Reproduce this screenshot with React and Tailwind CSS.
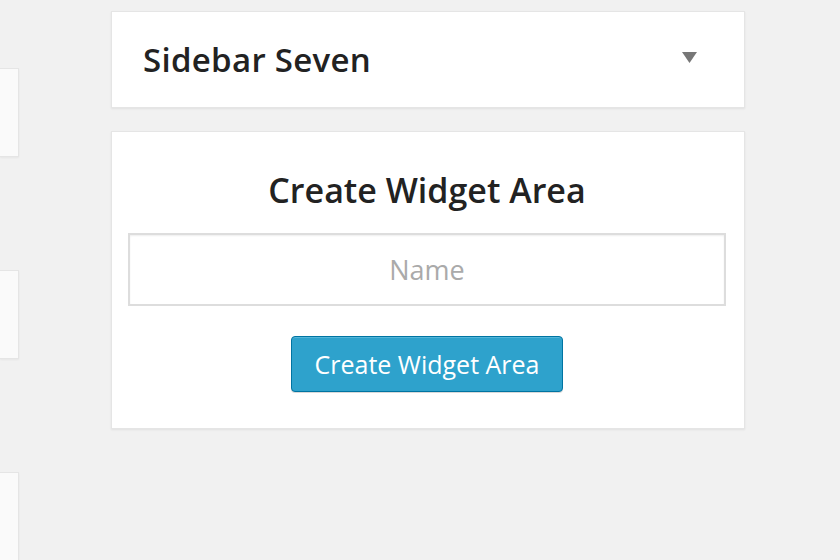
import React from 'react';

const LeftStub = ({ className }) => (
  <div className={`h-[89px] w-[19px] shrink-0 border-y border-r border-[#e5e5e5] bg-[#fafafa] shadow-[0_1px_2px_rgba(0,0,0,0.05)] ${className}`} />
);

export default function App() {
  return (
    <div className="flex h-[560px] w-[840px] overflow-hidden bg-[#f1f1f1]" style={{ fontFamily: '"Open Sans", "Noto Sans", sans-serif' }}>
      {/* cut-off widget column on the left */}
      <div className="flex w-[19px] shrink-0 flex-col pt-[68px]">
        <LeftStub />
        <LeftStub className="mt-[113px]" />
        <LeftStub className="mt-[113px] h-[120px]" />
      </div>

      <div className="ml-[92px] flex w-[634px] shrink-0 flex-col pt-[11px]">
        {/* Sidebar header */}
        <div className="flex h-[97px] items-center justify-between border border-[#e5e5e5] bg-white pl-[31px] pr-[47px] shadow-[0_1px_2px_rgba(0,0,0,0.07)]">
          <h3 className="text-[33px] font-semibold leading-[40px] tracking-[0.3px] text-[#222]">Sidebar Seven</h3>
          <svg width="15" height="11" viewBox="0 0 15 11" className="mt-[-4px]">
            <path d="M0 0 H15 L7.5 11 Z" fill="#777" />
          </svg>
        </div>

        {/* Create widget area */}
        <div className="mt-[23px] flex h-[298px] flex-col items-center border border-[#e5e5e5] bg-white pl-[16px] pr-[18px] pt-[37px] shadow-[0_1px_2px_rgba(0,0,0,0.07)]">
          <h3 className="text-[34px] font-semibold leading-[42px] text-[#222]">Create Widget Area</h3>
          <input
            type="text"
            placeholder="Name"
            className="mt-[22px] h-[73px] w-full border-2 border-[#dddddd] bg-white text-center text-[27px] text-[#333] shadow-[inset_0_1px_2px_rgba(0,0,0,0.07)] outline-none placeholder:text-[#aaaaaa]"
          />
          <button className="mt-[30px] h-[56px] w-[272px] rounded-[4px] border border-[#0074a2] bg-[#2ea2cc] text-[25px] leading-none text-white shadow-[inset_0_1px_0_rgba(120,200,230,0.5),0_1px_0_rgba(0,0,0,0.15)]">
            Create Widget Area
          </button>
        </div>
      </div>
    </div>
  );
}
